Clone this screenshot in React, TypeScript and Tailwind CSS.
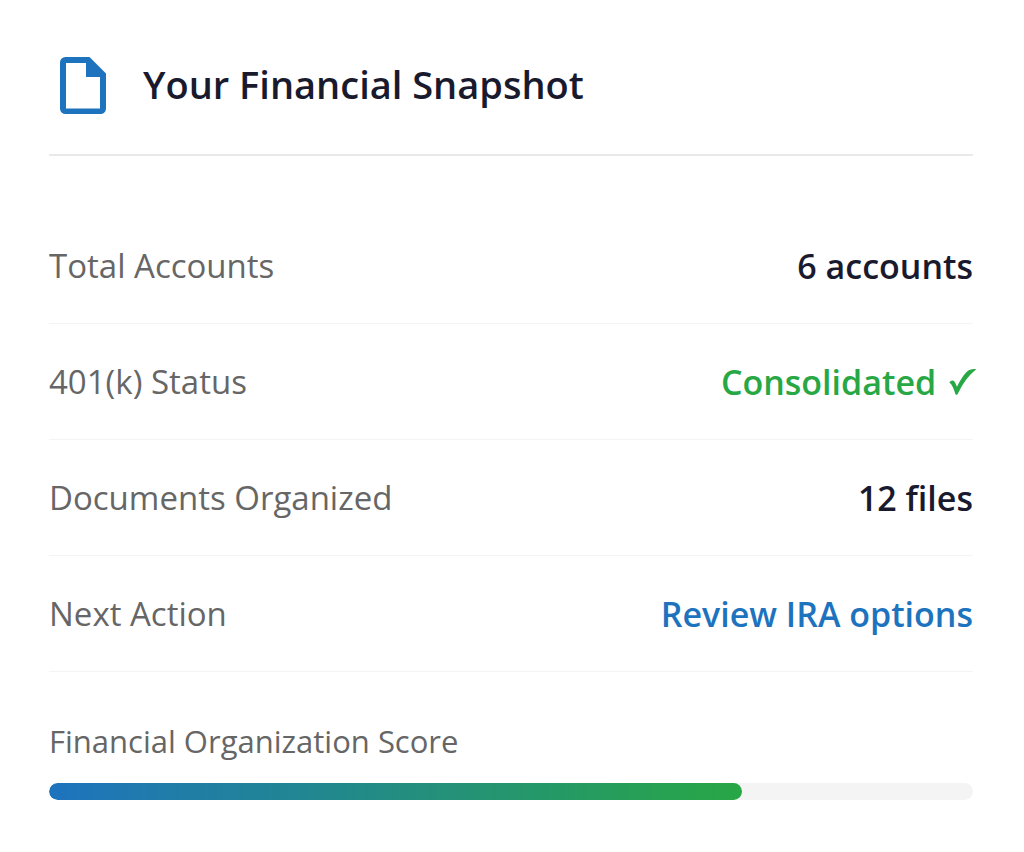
import React from "react";

type Row = { label: string; value: React.ReactNode; tone: string };

function Check() {
  return (
    <svg
      viewBox="0 0 84 78"
      className="-mr-1 ml-1 inline h-[26px] w-7 align-baseline"
      role="img"
      aria-label="Done"
    >
      <path
        d="M1 40C5 36 9 33.500 13 35C18 37 20 44 24 53C34 32 46 14 57 5C61 1.500 70 0 81 0C81 1 80 2 79 3C59 19 42 42 28 71C26 76 24 77 20 77C15 62 10 48 1 40Z"
        fill="currentColor"
      />
    </svg>
  );
}

const rows: Row[] = [
  { label: "Total Accounts", value: "6 accounts", tone: "text-[#1a1a2e]" },
  {
    label: "401(k) Status",
    value: (
      <>
        Consolidated <Check />
      </>
    ),
    tone: "text-[#28a745]",
  },
  { label: "Documents Organized", value: "12 files", tone: "text-[#1a1a2e]" },
  { label: "Next Action", value: "Review IRA options", tone: "text-[#1e73be]" },
];

const score = 75;

export default function App() {
  return (
    <main className="min-h-screen bg-white pt-[54px] pr-[51px] pb-12 pl-[49px] font-['Open_Sans',sans-serif]">
      <header className="flex items-end gap-[37px] border-b-2 border-[#e9e9e9] pb-10 pl-[11px]">
        <svg viewBox="0 0 46 57" className="h-[57px] w-[46px] shrink-0" aria-hidden="true">
          <path
            d="M5.5 0H29.5L46 16.500V51.5A5.5 5.5 0 0 1 40.5 57H5.5A5.5 5.5 0 0 1 0 51.5V5.5A5.5 5.5 0 0 1 5.5 0ZM6 6V51.500H40V20H26V6Z"
            fill="#1e73be"
            fillRule="evenodd"
          />
        </svg>
        <h1 className="text-[38px] leading-[60px] font-semibold text-[#1a1a2e]">
          Your Financial Snapshot
        </h1>
      </header>
      <dl className="mt-[52px]">
        {rows.map((row) => (
          <div
            key={row.label}
            className="flex h-[116px] items-center justify-between border-b border-[#f4f4f4]"
          >
            <dt className="text-[33px] leading-[52px] text-[#666]">{row.label}</dt>
            <dd
              className={`text-[34px] leading-[52px] font-semibold whitespace-nowrap ${row.tone}`}
            >
              {row.value}
            </dd>
          </div>
        ))}
      </dl>
      <section className="mt-[43px]">
        <h2 id="score-label" className="text-[31px] leading-[52px] text-[#666]">
          Financial Organization Score
        </h2>
        <div
          role="progressbar"
          aria-labelledby="score-label"
          aria-valuenow={score}
          aria-valuemin={0}
          aria-valuemax={100}
          className="mt-4 h-[17px] overflow-hidden rounded-full bg-[#f4f4f4]"
        >
          <div
            className="h-full rounded-full bg-linear-to-r/srgb from-[#1e73be] to-[#28a745]"
            style={{ width: `${score}%` }}
          />
        </div>
      </section>
    </main>
  );
}
